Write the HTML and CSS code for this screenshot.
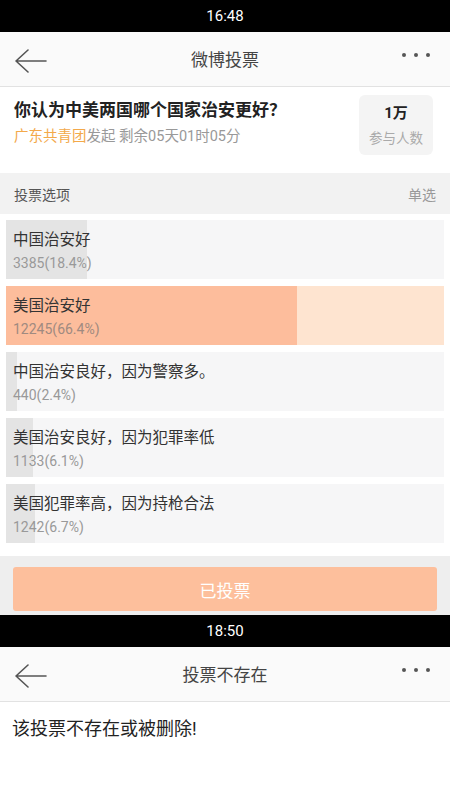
FILE: index.html
```html
<!DOCTYPE html>
<html lang="zh-CN">
<head>
  <meta charset="UTF-8" />
  <title>微博投票</title>
  <link rel="stylesheet" href="styles.css">
</head>
<body>
  <div class="statusbar">16:48</div>
  <div class="navbar">
    <svg class="back" width="34" height="26" viewBox="0 0 34 26">
      <path d="M13 2 L1 13 L13 24 M1 13 H31" fill="none" stroke="#555" stroke-width="1.6" stroke-linecap="round" stroke-linejoin="round"/>
    </svg>
    <div class="nav-title">微博投票</div>
    <div class="dots"><span></span><span></span><span></span></div>
  </div>

  <div class="poll-head">
    <div class="poll-info">
      <h3>你认为中美两国哪个国家治安更好？</h3>
      <p><span class="author">广东共青团</span>发起 剩余05天01时05分</p>
    </div>
    <div class="count-box">
      <strong>1万</strong>
      <span>参与人数</span>
    </div>
  </div>

  <div class="section-head">
    <span>投票选项</span>
    <span class="mode">单选</span>
  </div>

  <div class="options">
    <div class="option">
      <div class="bar" style="width: 18.4%"></div>
      <div class="label">中国治安好</div>
      <div class="num">3385(18.4%)</div>
    </div>
    <div class="option chosen">
      <div class="bar" style="width: 66.4%"></div>
      <div class="label">美国治安好</div>
      <div class="num">12245(66.4%)</div>
    </div>
    <div class="option">
      <div class="bar" style="width: 2.4%"></div>
      <div class="label">中国治安良好，因为警察多。</div>
      <div class="num">440(2.4%)</div>
    </div>
    <div class="option">
      <div class="bar" style="width: 6.1%"></div>
      <div class="label">美国治安良好，因为犯罪率低</div>
      <div class="num">1133(6.1%)</div>
    </div>
    <div class="option">
      <div class="bar" style="width: 6.7%"></div>
      <div class="label">美国犯罪率高，因为持枪合法</div>
      <div class="num">1242(6.7%)</div>
    </div>
  </div>

  <div class="footer">
    <button class="voted">已投票</button>
  </div>

  <div class="statusbar">18:50</div>
  <div class="navbar">
    <svg class="back" width="34" height="26" viewBox="0 0 34 26">
      <path d="M13 2 L1 13 L13 24 M1 13 H31" fill="none" stroke="#555" stroke-width="1.6" stroke-linecap="round" stroke-linejoin="round"/>
    </svg>
    <div class="nav-title">投票不存在</div>
    <div class="dots"><span></span><span></span><span></span></div>
  </div>
  <div class="message">该投票不存在或被删除!</div>
</body>
</html>
```

FILE: styles.css
```css
body {
  margin: 0;
  font-family: 'Roboto', 'Noto Sans CJK SC', sans-serif;
  background: #fff;
  color: #333;
  width: 450px;
  height: 800px;
  overflow: hidden;
}

.statusbar {
  background: #000;
  color: #fff;
  height: 32px;
  line-height: 32px;
  text-align: center;
  font-size: 15px;
}

.navbar {
  height: 54px;
  background: #fafafa;
  border-bottom: 1px solid #e2e2e2;
  display: flex;
  align-items: center;
  position: relative;
}

.navbar .back {
  margin-left: 15px;
  margin-top: 4px;
}

.nav-title {
  position: absolute;
  left: 0;
  right: 0;
  top: 16px;
  text-align: center;
  font-size: 17px;
  line-height: 24px;
  color: #444;
  pointer-events: none;
}

.dots {
  margin-left: auto;
  margin-right: 20px;
  margin-top: -8px;
  display: flex;
  gap: 8px;
}

.dots span {
  width: 4px;
  height: 4px;
  border-radius: 50%;
  background: #555;
}

.poll-head {
  display: flex;
  justify-content: space-between;
  padding: 8px 17px 16px 14px;
  height: 62px;
}

.poll-info h3 {
  margin: 1px 0 0;
  font-size: 17px;
  font-weight: bold;
  color: #222;
}

.poll-info p {
  margin: 3px 0 0;
  font-size: 14.5px;
  color: #999;
}

.author {
  color: #f3a94a;
}

.count-box {
  width: 74px;
  height: 60px;
  background: #f4f4f4;
  border-radius: 6px;
  display: flex;
  flex-direction: column;
  align-items: center;
  justify-content: center;
}

.count-box strong {
  font-size: 15px;
  color: #222;
  line-height: 20px;
}

.count-box span {
  font-size: 13.5px;
  color: #aaa;
  margin-top: 4px;
}

.section-head {
  background: #f2f2f2;
  height: 41px;
  display: flex;
  justify-content: space-between;
  align-items: center;
  padding: 0 14px;
  font-size: 14px;
  color: #555;
}

.section-head .mode {
  color: #999;
}

.options {
  padding: 6px 6px 13px;
  display: flex;
  flex-direction: column;
  gap: 7px;
}

.option {
  position: relative;
  height: 59px;
  background: #f6f6f7;
  padding: 0 7px;
}

.option .bar {
  position: absolute;
  left: 0;
  top: 0;
  bottom: 0;
  background: #e4e4e4;
}

.option.chosen {
  background: #fee4d0;
}

.option.chosen .bar {
  background: #fdbd9c;
}

.option .label,
.option .num {
  position: relative;
}

.option .label {
  padding-top: 9px;
  font-size: 15.5px;
  color: #333;
  line-height: 23px;
}

.option .num {
  font-size: 14px;
  color: #999;
  line-height: 22px;
}

.option.chosen .num {
  color: #a08a80;
}

.footer {
  background: #eeeeee;
  padding: 11px 13px 4px;
}

.voted {
  display: block;
  width: 100%;
  height: 44px;
  border: none;
  border-radius: 3px;
  background: #fdbf9c;
  color: #fff;
  font-family: 'Noto Sans CJK SC', sans-serif;
  font-size: 17px;
}

.message {
  padding: 12px 12px;
  font-size: 18px;
  color: #222;
}
```
